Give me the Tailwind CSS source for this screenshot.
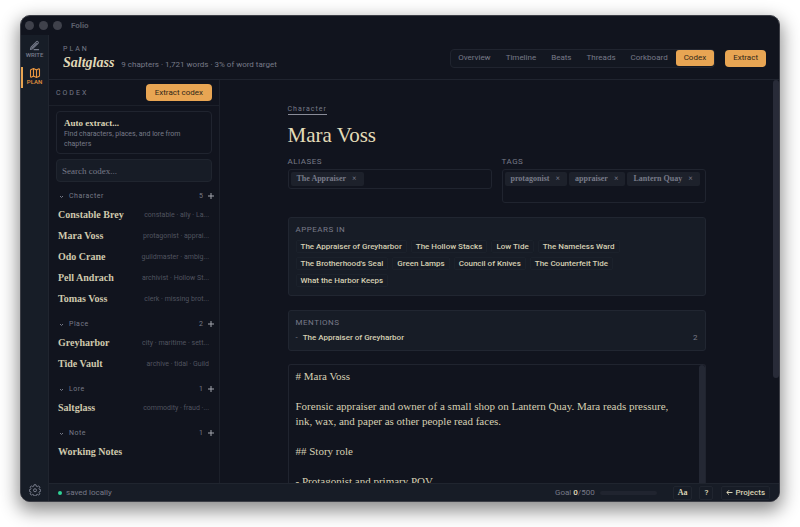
<!DOCTYPE html>
<html lang="en">
<head>
<meta charset="utf-8">
<meta name="viewport" content="width=device-width, initial-scale=1">
<title>Folio</title>
<script src="https://cdn.jsdelivr.net/npm/@tailwindcss/browser@4"></script>
</head>
<body class="bg-white">
<div class="h-screen px-5 pt-[15px] pb-[25px] font-['Roboto',sans-serif] text-[8px] leading-3 text-[#777a88]">
<div class="flex h-full flex-col overflow-hidden rounded-[10px] border border-[#3c3e46] bg-[#11141e] shadow-[0_7px_18px_2px_rgba(0,0,0,0.45)]">

  <!-- Title bar -->
  <div class="flex h-[19px] shrink-0 items-center gap-[5px] pl-1">
    <span class="size-[9px] rounded-full bg-[#3f414b]"></span>
    <span class="size-[9px] rounded-full bg-[#3f414b]"></span>
    <span class="size-[9px] rounded-full bg-[#3f414b]"></span>
    <span class="pl-1 font-bold text-[#5b5e6a]">Folio</span>
  </div>

  <div class="flex min-h-0 flex-1">
    <!-- Mode rail -->
    <nav aria-label="Modes" class="flex w-7 shrink-0 flex-col items-center border-r border-[#20252f] bg-[#171d27] text-[6px] leading-[6px] font-medium">
      <a href="#write" class="flex h-7 w-full flex-col items-center gap-px pt-[5px] text-[#777c8b]">
        <svg class="size-[11px]" viewBox="0 0 24 24" fill="none" stroke="currentColor" stroke-width="2.2" stroke-linecap="round" stroke-linejoin="round" aria-hidden="true"><path d="M11 21h10"/><path d="M16 3.800a2.500 2.500 0 0 1 3.600 3.600L8 19l-5 1.500L4.500 15.500z"/><path d="M6 17.500L16.500 7"/></svg>
        WRITE
      </a>
      <a href="#plan" aria-current="page" class="mt-1 flex h-[21px] w-full flex-col items-center border-l-2 border-[#e9a552] pr-[2px] text-[#e9953f]">
        <svg class="size-[12px] shrink-0" viewBox="0 0 24 24" fill="none" stroke="currentColor" stroke-width="2.2" stroke-linecap="round" stroke-linejoin="round" aria-hidden="true"><path d="M14.1 5.55a2 2 0 0 0 1.8 0l3.65-1.83A1 1 0 0 1 21 4.6v12.8a1 1 0 0 1-.55.9l-4.55 2.25a2 2 0 0 1-1.8 0l-4.2-2.1a2 2 0 0 0-1.8 0l-3.65 1.83A1 1 0 0 1 3 19.4V6.6a1 1 0 0 1 .55-.9l4.55-2.25a2 2 0 0 1 1.8 0z"/><path d="M15 5.8v15"/><path d="M9 3.2v15"/></svg>
        PLAN
      </a>
      <button type="button" aria-label="Settings" class="mt-auto mb-[5px] text-[#777c8b]">
        <svg class="size-[12px]" viewBox="0 0 24 24" fill="none" stroke="currentColor" stroke-width="2" stroke-linejoin="round" aria-hidden="true"><path d="M10 1.500h4l.6 3 2 .9 2.600-1.700 2.600 2.700-1.700 2.600.9 2 2.500.500v3l-2.500.6-.9 2 1.700 2.600-2.600 2.600-2.600-1.700-2 .9-.6 2.500h-4l-.6-2.500-2-.9-2.600 1.700-2.600-2.600 1.700-2.600-.9-2-2.500-.6v-3l2.500-.5.9-2-1.700-2.600 2.600-2.700 2.600 1.700 2-.9z"/><circle cx="12" cy="12.500" r="3"/></svg>
      </button>
    </nav>

    <div class="flex min-w-0 flex-1 flex-col">
      <!-- Page header -->
      <header class="flex h-[45px] shrink-0 items-center justify-between border-b border-[#20242f] pr-[13px] pl-[14px]">
        <div class="pt-1">
          <div class="text-[7px] leading-2 tracking-[2px]">PLAN</div>
          <div class="flex items-baseline gap-[7px]">
            <h1 class="font-['Liberation_Serif',serif] text-[14px] leading-5 font-bold text-[#e0d9b7] italic">Saltglass</h1>
            <span>9 chapters · 1,721 words · 3% of word target</span>
          </div>
        </div>
        <div class="flex items-center gap-[10px] pt-[2px]">
          <nav aria-label="Plan views" class="flex h-[19px] items-center gap-px rounded-[4px] border border-[#20242f] bg-[#131721]">
            <a href="#overview" class="px-[7px]">Overview</a>
            <a href="#timeline" class="px-[7px]">Timeline</a>
            <a href="#beats" class="px-[7px]">Beats</a>
            <a href="#threads" class="px-[7px]">Threads</a>
            <a href="#corkboard" class="px-[7px]">Corkboard</a>
            <a href="#codex" aria-current="page" class="rounded-[3px] bg-[#e8a553] px-2 py-[2px] text-[#302719]">Codex</a>
          </nav>
          <button type="button" class="h-[17px] rounded-[4px] bg-[#e8a553] px-2 text-[#302719]">Extract</button>
        </div>
      </header>

      <div class="flex min-h-0 flex-1">
        <!-- Codex sidebar -->
        <aside class="flex w-[171px] shrink-0 flex-col border-r border-[#1c202a]">
          <div class="flex h-[26px] shrink-0 items-center justify-between border-b border-[#1c202a] pr-[7px] pl-[7px]">
            <h2 class="text-[7px] tracking-[2px]">CODEX</h2>
            <button type="button" class="h-[17px] rounded-[4px] bg-[#e8a553] px-[9px] text-[#302719]">Extract codex</button>
          </div>
          <div class="flex flex-col gap-[5px] px-[7px] pt-[5px]">
            <button type="button" class="h-[43px] rounded-[4px] border border-[#20242f] px-[7px] text-left text-[7px] leading-[10px]">
              <span class="block font-['Liberation_Serif',serif] text-[9px] leading-3 font-bold text-[#d9d2b4]">Auto extract...</span>
              Find characters, places, and lore from chapters
            </button>
            <input type="search" aria-label="Search codex" placeholder="Search codex..." class="h-[23px] w-full rounded-[4px] border border-[#20252f] bg-[#171c26] px-[5px] font-['Liberation_Serif',serif] text-[9px] placeholder:text-[#777a88]">
          </div>

          <div class="flex flex-col gap-[7px] pt-[6px] pr-[5px] pl-[9px]">
            <section>
              <div class="flex h-4 items-center text-[7px]">
                <svg class="mr-[5px] ml-[1px] size-[5px]" viewBox="0 0 10 10" fill="none" stroke="currentColor" stroke-width="2" aria-hidden="true"><path d="M2 4l3 3 3-3"/></svg>
                <h3 class="flex-1 tracking-[0.5px]">Character</h3><span class="mr-[5px]">5</span>
                <button type="button" aria-label="Add character"><svg class="size-[6px]" viewBox="0 0 6 6" stroke="#a4a6ae" aria-hidden="true"><path d="M3 0v6M0 3h6"/></svg></button>
              </div>
              <ul class="text-[7px] text-[#50535f]">
                <li class="flex h-[21px] items-center justify-between pr-[5px]"><a href="#brey" class="font-['Liberation_Serif',serif] text-[10px] font-bold text-[#cfc9ad]">Constable Brey</a><span>constable · ally · La...</span></li>
                <li class="flex h-[21px] items-center justify-between pr-[5px]"><a href="#mara" class="font-['Liberation_Serif',serif] text-[10px] font-bold text-[#cfc9ad]">Mara Voss</a><span>protagonist · apprai...</span></li>
                <li class="flex h-[21px] items-center justify-between pr-[5px]"><a href="#odo" class="font-['Liberation_Serif',serif] text-[10px] font-bold text-[#cfc9ad]">Odo Crane</a><span>guildmaster · ambig...</span></li>
                <li class="flex h-[21px] items-center justify-between pr-[5px]"><a href="#pell" class="font-['Liberation_Serif',serif] text-[10px] font-bold text-[#cfc9ad]">Pell Andrach</a><span>archivist · Hollow St...</span></li>
                <li class="flex h-[21px] items-center justify-between pr-[5px]"><a href="#tomas" class="font-['Liberation_Serif',serif] text-[10px] font-bold text-[#cfc9ad]">Tomas Voss</a><span>clerk · missing brot...</span></li>
              </ul>
            </section>
            <section>
              <div class="flex h-4 items-center text-[7px]">
                <svg class="mr-[5px] ml-[1px] size-[5px]" viewBox="0 0 10 10" fill="none" stroke="currentColor" stroke-width="2" aria-hidden="true"><path d="M2 4l3 3 3-3"/></svg>
                <h3 class="flex-1 tracking-[0.5px]">Place</h3><span class="mr-[5px]">2</span>
                <button type="button" aria-label="Add place"><svg class="size-[6px]" viewBox="0 0 6 6" stroke="#a4a6ae" aria-hidden="true"><path d="M3 0v6M0 3h6"/></svg></button>
              </div>
              <ul class="text-[7px] text-[#50535f]">
                <li class="flex h-[21px] items-center justify-between pr-[5px]"><a href="#greyharbor" class="font-['Liberation_Serif',serif] text-[10px] font-bold text-[#cfc9ad]">Greyharbor</a><span>city · maritime · sett...</span></li>
                <li class="flex h-[21px] items-center justify-between pr-[5px]"><a href="#vault" class="font-['Liberation_Serif',serif] text-[10px] font-bold text-[#cfc9ad]">Tide Vault</a><span>archive · tidal · Guild</span></li>
              </ul>
            </section>
            <section>
              <div class="flex h-4 items-center text-[7px]">
                <svg class="mr-[5px] ml-[1px] size-[5px]" viewBox="0 0 10 10" fill="none" stroke="currentColor" stroke-width="2" aria-hidden="true"><path d="M2 4l3 3 3-3"/></svg>
                <h3 class="flex-1 tracking-[0.5px]">Lore</h3><span class="mr-[5px]">1</span>
                <button type="button" aria-label="Add lore"><svg class="size-[6px]" viewBox="0 0 6 6" stroke="#a4a6ae" aria-hidden="true"><path d="M3 0v6M0 3h6"/></svg></button>
              </div>
              <ul class="text-[7px] text-[#50535f]">
                <li class="flex h-[21px] items-center justify-between pr-[5px]"><a href="#saltglass" class="font-['Liberation_Serif',serif] text-[10px] font-bold text-[#cfc9ad]">Saltglass</a><span>commodity · fraud ·...</span></li>
              </ul>
            </section>
            <section>
              <div class="flex h-4 items-center text-[7px]">
                <svg class="mr-[5px] ml-[1px] size-[5px]" viewBox="0 0 10 10" fill="none" stroke="currentColor" stroke-width="2" aria-hidden="true"><path d="M2 4l3 3 3-3"/></svg>
                <h3 class="flex-1 tracking-[0.5px]">Note</h3><span class="mr-[5px]">1</span>
                <button type="button" aria-label="Add note"><svg class="size-[6px]" viewBox="0 0 6 6" stroke="#a4a6ae" aria-hidden="true"><path d="M3 0v6M0 3h6"/></svg></button>
              </div>
              <ul>
                <li class="flex h-[21px] items-center"><a href="#notes" class="font-['Liberation_Serif',serif] text-[10px] font-bold text-[#cfc9ad]">Working Notes</a></li>
              </ul>
            </section>
          </div>
        </aside>

        <!-- Entry -->
        <main class="flex min-w-0 flex-1 justify-center overflow-hidden px-5 pt-6">
          <article class="flex w-full max-w-[418px] flex-col">
            <a href="#type" class="self-start border-b border-[#8a8c98] text-[7px] leading-[10px] tracking-[1px]">Character</a>
            <h2 class="mt-[6px] font-['Liberation_Serif',serif] text-[21px] leading-7 text-[#e3dcb8]">Mara Voss</h2>

            <div class="mt-[7px] grid grid-cols-2 items-start gap-[10px]">
              <div>
                <h3 class="leading-[11px] tracking-[0.5px]">ALIASES</h3>
                <div class="mt-[2px] flex h-5 gap-[2px] rounded-[3px] border border-[#20242f] p-[2px]">
                  <span class="flex h-[14px] items-center gap-[6px] rounded-[2px] bg-[#1d212b] pr-[7px] pl-[6px] font-['Liberation_Serif',serif] text-[8px] font-bold whitespace-nowrap">The Appraiser <button type="button" aria-label="Remove The Appraiser">×</button></span>
                </div>
              </div>
              <div>
                <h3 class="leading-[11px] tracking-[0.5px]">TAGS</h3>
                <div class="mt-[2px] flex h-[34px] gap-[2px] rounded-[3px] border border-[#20242f] p-[2px]">
                  <span class="flex h-[14px] items-center gap-[6px] rounded-[2px] bg-[#1d212b] pr-[7px] pl-[6px] font-['Liberation_Serif',serif] text-[8px] font-bold whitespace-nowrap">protagonist <button type="button" aria-label="Remove protagonist">×</button></span>
                  <span class="flex h-[14px] items-center gap-[6px] rounded-[2px] bg-[#1d212b] pr-[7px] pl-[6px] font-['Liberation_Serif',serif] text-[8px] font-bold whitespace-nowrap">appraiser <button type="button" aria-label="Remove appraiser">×</button></span>
                  <span class="flex h-[14px] items-center gap-[6px] rounded-[2px] bg-[#1d212b] pr-[7px] pl-[6px] font-['Liberation_Serif',serif] text-[8px] font-bold whitespace-nowrap">Lantern Quay <button type="button" aria-label="Remove Lantern Quay">×</button></span>
                </div>
              </div>
            </div>

            <section class="mt-[14px] h-[79px] shrink-0 rounded-[3px] border border-[#212631] bg-[#171c26] px-[7px] pt-[6px]">
              <h3 class="tracking-[0.5px]">APPEARS IN</h3>
              <div class="mt-1 flex flex-wrap gap-1 font-medium text-[#d5cfb3]">
                <a href="#c1" class="rounded-[2px] border border-[#1b212b] px-1 leading-[11px]">The Appraiser of Greyharbor</a>
                <a href="#c2" class="rounded-[2px] border border-[#1b212b] px-1 leading-[11px]">The Hollow Stacks</a>
                <a href="#c3" class="rounded-[2px] border border-[#1b212b] px-1 leading-[11px]">Low Tide</a>
                <a href="#c4" class="mr-10 rounded-[2px] border border-[#1b212b] px-1 leading-[11px]">The Nameless Ward</a>
                <a href="#c5" class="rounded-[2px] border border-[#1b212b] px-1 leading-[11px]">The Brotherhood's Seal</a>
                <a href="#c6" class="rounded-[2px] border border-[#1b212b] px-1 leading-[11px]">Green Lamps</a>
                <a href="#c7" class="rounded-[2px] border border-[#1b212b] px-1 leading-[11px]">Council of Knives</a>
                <a href="#c8" class="rounded-[2px] border border-[#1b212b] px-1 leading-[11px]">The Counterfeit Tide</a>
                <a href="#c9" class="rounded-[2px] border border-[#1b212b] px-1 leading-[11px]">What the Harbor Keeps</a>
              </div>
            </section>

            <section class="mt-[14px] h-[41px] shrink-0 rounded-[3px] border border-[#212631] bg-[#171c26] px-[7px] pt-[6px]">
              <h3 class="tracking-[0.5px]">MENTIONS</h3>
              <div class="mt-[3px] flex gap-[5px]"><span>-</span><a href="#m1" class="flex-1 font-medium text-[#d5cfb3]">The Appraiser of Greyharbor</a><span>2</span></div>
            </section>

            <div class="mt-[13px] flex min-h-0 flex-1 overflow-hidden rounded-t-[3px] border border-b-0 border-[#20242f]">
              <textarea aria-label="Entry text" class="h-[200px] flex-1 resize-none overflow-hidden pt-1 pr-4 pl-[7px] font-['Liberation_Serif',serif] text-[11px] leading-[15px] text-[#d5cfb3]">
# Mara Voss

Forensic appraiser and owner of a small shop on Lantern Quay. Mara reads pressure, ink, wax, and paper as other people read faces.

## Story role

- Protagonist and primary POV</textarea>
              <div class="w-[6px] rounded-t-[3px] bg-[#242834]"></div>
            </div>
          </article>
        </main>
        <div class="h-[74%] w-[6px] shrink-0 self-start rounded-[3px] bg-[#282b38]"></div>
      </div>

      <!-- Status bar -->
      <footer class="flex h-[18px] shrink-0 items-center border-t border-[#20252f] bg-[#171c26] pr-[9px] pl-[9px]">
        <span class="mr-1 size-1 rounded-full bg-[#2fd396]"></span>
        <span class="flex-1">saved locally</span>
        <span>Goal <b class="font-semibold text-[#e0d9b7]">0</b>/500</span>
        <div role="progressbar" aria-label="Daily goal" aria-valuenow="0" aria-valuemin="0" aria-valuemax="500" class="mr-4 ml-[5px] h-1 w-[57px] rounded-full bg-[#20242f]"></div>
        <button type="button" class="h-[14px] rounded-[2px] border border-[#20252f] px-1 font-['Liberation_Serif',serif] text-[8px] font-bold text-[#d9d2b4]">Aa</button>
        <button type="button" aria-label="Help" class="ml-[7px] h-[14px] rounded-[2px] border border-[#20252f] px-1 font-semibold text-[#d9d2b4]">?</button>
        <button type="button" class="ml-2 flex h-[14px] items-center gap-[2px] rounded-[2px] border border-[#20252f] px-1 font-medium text-[#d9d2b4]"><svg class="size-[7px]" viewBox="0 0 7 7" fill="none" stroke="currentColor" aria-hidden="true"><path d="M6.500 3.500H1M3 1.300L.8 3.500 3 5.700"/></svg>Projects</button>
      </footer>
    </div>
  </div>
</div>
</div>
</body>
</html>
